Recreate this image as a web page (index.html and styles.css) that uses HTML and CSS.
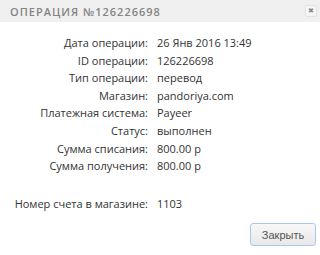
FILE: index.html
```html
<!DOCTYPE html>
<html lang="ru">
<head>
  <meta charset="UTF-8">
  <title>Операция №126226698</title>
  <link rel="stylesheet" href="styles.css">
</head>
<body>

<div class="dialog">
  <div class="dialog-head">
    <span class="dialog-title">Операция №126226698</span>
    <button class="close" type="button" title="Закрыть">&#x2716;</button>
  </div>

  <div class="details">
    <div class="label">Дата операции:</div><div class="value">26 Янв 2016 13:49</div>
    <div class="label">ID операции:</div><div class="value">126226698</div>
    <div class="label">Тип операции:</div><div class="value">перевод</div>
    <div class="label">Магазин:</div><div class="value">pandoriya.com</div>
    <div class="label">Платежная система:</div><div class="value">Payeer</div>
    <div class="label">Статус:</div><div class="value">выполнен</div>
    <div class="label">Сумма списания:</div><div class="value">800.00 р</div>
    <div class="label">Сумма получения:</div><div class="value">800.00 р</div>
    <div class="label spaced">Номер счета в магазине:</div><div class="value spaced">1103</div>
  </div>

  <div class="dialog-foot">
    <button class="btn" type="button">Закрыть</button>
  </div>
</div>

</body>
</html>
```

FILE: styles.css
```css
body {
  margin: 0;
  background: #fff;
  font-family: "Open Sans", "DejaVu Sans", sans-serif;
  color: #333;
}
.dialog {
  width: 320px;
  height: 255px;
  display: flex;
  flex-direction: column;
}
.dialog-head {
  height: 22px;
  background: #f0f0f0;
  display: flex;
  align-items: center;
  justify-content: space-between;
  padding: 0 3px 0 10px;
}
.dialog-title {
  text-transform: uppercase;
  font-size: 11px;
  font-weight: 600;
  letter-spacing: 1px;
  color: #858585;
}
.close {
  width: 12px;
  height: 12px;
  padding: 0;
  border: 1px solid #e2e2e2;
  border-radius: 2px;
  background: #f6f6f6;
  color: #888;
  font-size: 7px;
  line-height: 10px;
  text-align: center;
}
.details {
  display: grid;
  grid-template-columns: 148px auto;
  column-gap: 9px;
  padding-top: 12px;
  font-size: 11px;
  line-height: 17.6px;
}
.label {
  text-align: right;
}
.spaced {
  margin-top: 20px;
}
.dialog-foot {
  display: flex;
  justify-content: flex-end;
  padding: 11px 4px 0 0;
}
.btn {
  width: 66px;
  height: 23px;
  border: 1px solid #a9c7f3;
  border-radius: 3px;
  background: linear-gradient(#f8f8f8, #e8e8e8);
  color: #555;
  font-family: "Liberation Sans", Arial, sans-serif;
  font-size: 11px;
  padding: 0;
}
```
